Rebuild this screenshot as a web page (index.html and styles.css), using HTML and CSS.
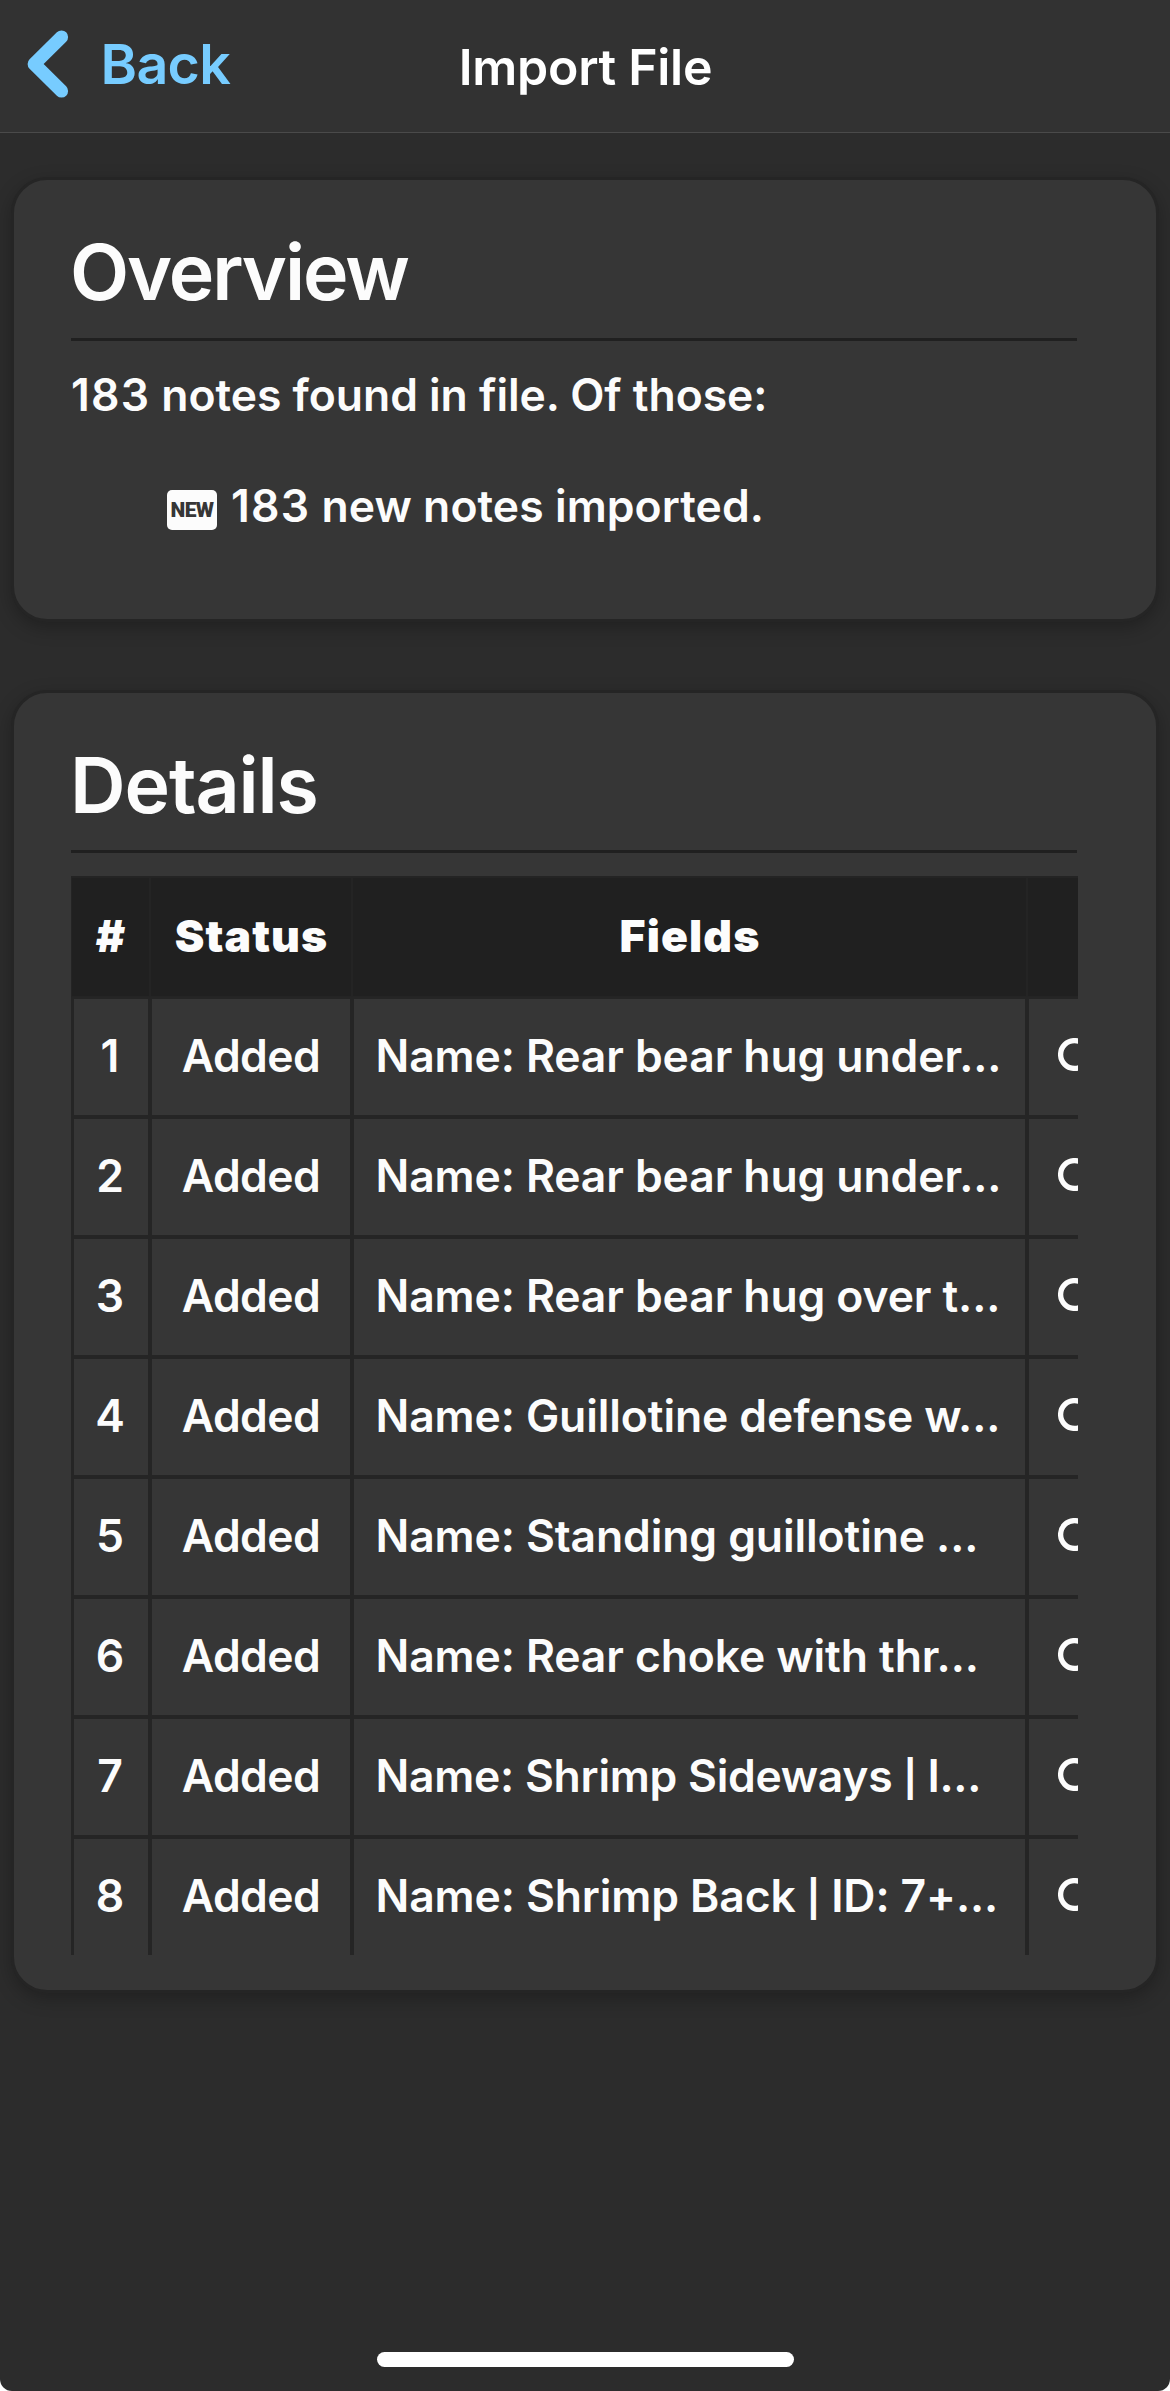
FILE: index.html
```
<!DOCTYPE html>
<html lang="en">
<head>
<meta charset="utf-8">
<title>Import File</title>
<link rel="stylesheet" href="styles.css">
</head>
<body>
<div class="screen">
  <header class="navbar">
    <a class="back">
      <svg class="chevron" width="42" height="68" viewBox="0 0 42 68"><path d="M34.5 7 L7.2 34 L34.5 61" fill="none" stroke="#77ccff" stroke-width="13.2" stroke-linecap="round" stroke-linejoin="round"/></svg>
      <span class="back-label">Back</span>
    </a>
    <h1 class="title">Import File</h1>
  </header>

  <main class="content">
    <section class="card overview">
      <h2 class="heading heading-overview">Overview</h2>
      <p class="summary"><span class="count">183</span> notes found in file. Of those:</p>
      <div class="result">
        <span class="new-icon">NEW</span>
        <span><span class="count">183</span> new notes imported.</span>
      </div>
    </section>

    <section class="card details">
      <h2 class="heading heading-details">Details</h2>
      <div class="table-clip">
        <table class="notes">
          <colgroup><col class="c-num"><col class="c-status"><col class="c-fields"><col class="c-action"></colgroup>
          <thead><tr><th>#</th><th>Status</th><th>Fields</th><th></th></tr></thead>
          <tbody>
            <tr><td>1</td><td class="status">Added</td><td class="fields">Name: Rear bear hug under...</td><td class="action"><svg class="lens" width="33" height="33" viewBox="0 0 33 33"><circle cx="16.5" cy="16.5" r="13.9"/></svg></td></tr>
            <tr><td>2</td><td class="status">Added</td><td class="fields">Name: Rear bear hug under...</td><td class="action"><svg class="lens" width="33" height="33" viewBox="0 0 33 33"><circle cx="16.5" cy="16.5" r="13.9"/></svg></td></tr>
            <tr><td>3</td><td class="status">Added</td><td class="fields">Name: Rear bear hug over t...</td><td class="action"><svg class="lens" width="33" height="33" viewBox="0 0 33 33"><circle cx="16.5" cy="16.5" r="13.9"/></svg></td></tr>
            <tr><td>4</td><td class="status">Added</td><td class="fields">Name: Guillotine defense w...</td><td class="action"><svg class="lens" width="33" height="33" viewBox="0 0 33 33"><circle cx="16.5" cy="16.5" r="13.9"/></svg></td></tr>
            <tr><td>5</td><td class="status">Added</td><td class="fields">Name: Standing guillotine ...</td><td class="action"><svg class="lens" width="33" height="33" viewBox="0 0 33 33"><circle cx="16.5" cy="16.5" r="13.9"/></svg></td></tr>
            <tr><td>6</td><td class="status">Added</td><td class="fields">Name: Rear choke with thr...</td><td class="action"><svg class="lens" width="33" height="33" viewBox="0 0 33 33"><circle cx="16.5" cy="16.5" r="13.9"/></svg></td></tr>
            <tr><td>7</td><td class="status">Added</td><td class="fields fields-tight">Name: Shrimp Sideways <span class="bar">|</span> I...</td><td class="action"><svg class="lens" width="33" height="33" viewBox="0 0 33 33"><circle cx="16.5" cy="16.5" r="13.9"/></svg></td></tr>
            <tr><td>8</td><td class="status">Added</td><td class="fields">Name: Shrimp Back <span class="bar">|</span> ID: 7+...</td><td class="action"><svg class="lens" width="33" height="33" viewBox="0 0 33 33"><circle cx="16.5" cy="16.5" r="13.9"/></svg></td></tr>
          </tbody>
        </table>
      </div>
    </section>
  </main>

  <div class="home-indicator"></div>
</div>
</body>
</html>
```
FILE: styles.css
```
* { box-sizing: border-box; }

body {
  margin: 0;
  background: #fff;
  font-family: Inter, "Liberation Sans", sans-serif;
  font-size: 44.5px;
  font-weight: 560;
  line-height: 54px;
  color: #fcfcfc;
}

.screen {
  display: flex;
  flex-direction: column;
  height: 2391px;
  background: #2c2c2c;
  border-radius: 0 0 12px 12px;
  overflow: hidden;
}

/* Navigation bar */
.navbar {
  display: grid;
  grid-template-columns: 1fr auto 1fr;
  flex: none;
  height: 133px;
  background: #323232;
  border-bottom: 1px solid #4a4a4a;
}

.back {
  display: flex;
  align-items: flex-start;
  padding: 30px 0 0 27px;
  color: #77ccff;
}

.chevron { flex: none; }

.back-label {
  margin: 0 0 0 31.5px;
  font-size: 55.5px;
  line-height: 68px;
  letter-spacing: -0.7px;
}

.title {
  margin: 0;
  padding: 35px 0 0 1px;
  font-size: 50px;
  line-height: 64px;
  font-weight: 600;
  letter-spacing: -0.3px;
  color: #fff;
}

/* Cards */
.content {
  flex: 1;
  padding: 44px 11px 0;
}

.card {
  padding: 0 79px 0 57px;
  background: #363636;
  border: 3px solid #252525;
  border-radius: 36px;
  box-shadow: 0 6px 18px rgba(0, 0, 0, 0.26);
}

.overview { height: 445px; }

.details {
  height: 1303px;
  margin-top: 68px;
}

.heading {
  margin: 0;
  padding: 45px 0 19px;
  border-bottom: 3px solid #202020;
  font-size: 77px;
  line-height: 94px;
  font-weight: 560;
  text-indent: -1px;
}

.heading-overview { letter-spacing: -2.1px; }

.heading-details {
  padding-bottom: 18px;
  letter-spacing: -1.1px;
}

.summary {
  margin: 27px 0 57px;
  letter-spacing: -0.06px;
}

.count { letter-spacing: 1.2px; }

.result {
  display: flex;
  gap: 14px;
  padding-left: 96px;
  letter-spacing: 0.05px;
}

.new-icon {
  width: 50px;
  height: 40px;
  margin-top: 11px;
  border-radius: 5px;
  background: #fcfcfc;
  color: #363636;
  font-family: Roboto, sans-serif;
  font-size: 21px;
  font-weight: 900;
  line-height: 40px;
  letter-spacing: -0.6px;
  text-align: center;
}

/* Notes table, cut off at the edge of its scroll area */
.table-clip {
  width: 1007px;
  height: 1079px;
  margin-top: 23px;
  overflow: hidden;
}

.notes {
  width: 1156px;
  table-layout: fixed;
  border-collapse: separate;
  border-spacing: 0;
}

.c-num { width: 79px; }
.c-status { width: 202px; }
.c-fields { width: 675px; }
.c-action { width: 200px; }

.notes th {
  height: 121px;
  padding: 0 0 3px 1px;
  background: #202020;
  border: 1px solid #242424;
  border-top-width: 2px;
  font-weight: 900;
  letter-spacing: 1.1px;
}

.notes td {
  height: 120px;
  padding: 0 0 2px;
  border: 2px solid #252525;
  text-align: center;
}

.notes td:first-child {
  padding-right: 2px;
  border-left-width: 3px;
}

.notes td.status { letter-spacing: -0.6px; }

.notes td.fields {
  padding-left: 21.5px;
  text-align: left;
  white-space: nowrap;
  letter-spacing: -0.12px;
}

.notes td.fields-tight { letter-spacing: -0.28px; }

.bar {
  font-size: 36px;
  font-weight: 650;
  line-height: 1;
}

.notes td.action {
  padding: 0 0 5px 29.3px;
  text-align: left;
}

.lens {
  display: block;
  fill: none;
  stroke: #fcfcfc;
  stroke-width: 5.3px;
}

.home-indicator {
  flex: none;
  align-self: center;
  width: 417px;
  height: 15px;
  margin-bottom: 24px;
  border-radius: 8px;
  background: #fff;
}
```
